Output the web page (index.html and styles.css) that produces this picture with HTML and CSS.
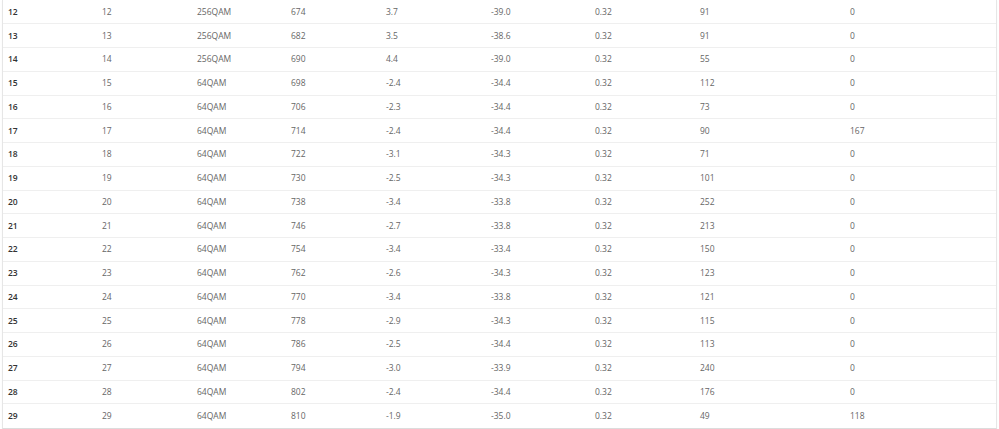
FILE: index.html
```html
<!DOCTYPE html>
<html>
<head>
<meta charset="utf-8">
<link rel="stylesheet" href="styles.css">
</head>
<body>
<div class="panel">
<table class="grid">
<colgroup>
<col class="c1"><col class="c2"><col class="c3"><col class="c4"><col class="c5"><col class="c6"><col class="c7"><col class="c8"><col class="c9">
</colgroup>
<tbody>
<tr><th>12</th><td>12</td><td>256QAM</td><td>674</td><td>3.7</td><td>-39.0</td><td>0.32</td><td>91</td><td>0</td></tr>
<tr><th>13</th><td>13</td><td>256QAM</td><td>682</td><td>3.5</td><td>-38.6</td><td>0.32</td><td>91</td><td>0</td></tr>
<tr><th>14</th><td>14</td><td>256QAM</td><td>690</td><td>4.4</td><td>-39.0</td><td>0.32</td><td>55</td><td>0</td></tr>
<tr><th>15</th><td>15</td><td>64QAM</td><td>698</td><td>-2.4</td><td>-34.4</td><td>0.32</td><td>112</td><td>0</td></tr>
<tr><th>16</th><td>16</td><td>64QAM</td><td>706</td><td>-2.3</td><td>-34.4</td><td>0.32</td><td>73</td><td>0</td></tr>
<tr><th>17</th><td>17</td><td>64QAM</td><td>714</td><td>-2.4</td><td>-34.4</td><td>0.32</td><td>90</td><td>167</td></tr>
<tr><th>18</th><td>18</td><td>64QAM</td><td>722</td><td>-3.1</td><td>-34.3</td><td>0.32</td><td>71</td><td>0</td></tr>
<tr><th>19</th><td>19</td><td>64QAM</td><td>730</td><td>-2.5</td><td>-34.3</td><td>0.32</td><td>101</td><td>0</td></tr>
<tr><th>20</th><td>20</td><td>64QAM</td><td>738</td><td>-3.4</td><td>-33.8</td><td>0.32</td><td>252</td><td>0</td></tr>
<tr><th>21</th><td>21</td><td>64QAM</td><td>746</td><td>-2.7</td><td>-33.8</td><td>0.32</td><td>213</td><td>0</td></tr>
<tr><th>22</th><td>22</td><td>64QAM</td><td>754</td><td>-3.4</td><td>-33.4</td><td>0.32</td><td>150</td><td>0</td></tr>
<tr><th>23</th><td>23</td><td>64QAM</td><td>762</td><td>-2.6</td><td>-34.3</td><td>0.32</td><td>123</td><td>0</td></tr>
<tr><th>24</th><td>24</td><td>64QAM</td><td>770</td><td>-3.4</td><td>-33.8</td><td>0.32</td><td>121</td><td>0</td></tr>
<tr><th>25</th><td>25</td><td>64QAM</td><td>778</td><td>-2.9</td><td>-34.3</td><td>0.32</td><td>115</td><td>0</td></tr>
<tr><th>26</th><td>26</td><td>64QAM</td><td>786</td><td>-2.5</td><td>-34.4</td><td>0.32</td><td>113</td><td>0</td></tr>
<tr><th>27</th><td>27</td><td>64QAM</td><td>794</td><td>-3.0</td><td>-33.9</td><td>0.32</td><td>240</td><td>0</td></tr>
<tr><th>28</th><td>28</td><td>64QAM</td><td>802</td><td>-2.4</td><td>-34.4</td><td>0.32</td><td>176</td><td>0</td></tr>
<tr class="last"><th>29</th><td>29</td><td>64QAM</td><td>810</td><td>-1.9</td><td>-35.0</td><td>0.32</td><td>49</td><td>118</td></tr>
</tbody>
</table>
</div>
</body>
</html>
```

FILE: styles.css
```css
html, body {
  margin: 0;
  padding: 0;
  background: #ffffff;
}
body {
  font-family: "Open Sans", "Liberation Sans", sans-serif;
  font-size: 8.5px;
  color: #666666;
}
.panel {
  margin-left: 2px;
  width: 993px;
  border-left: 1px solid #e6e6e6;
  border-right: 1px solid #e6e6e6;
  border-bottom: 1px solid #dcdcdc;
  box-shadow: 0 1px 1px rgba(0,0,0,0.06);
}
.grid {
  width: 100%;
  border-collapse: collapse;
  table-layout: fixed;
}
.c1 { width: 94px; }
.c2 { width: 95px; }
.c3 { width: 94px; }
.c4 { width: 95px; }
.c5 { width: 105px; }
.c6 { width: 104px; }
.c7 { width: 105px; }
.c8 { width: 150px; }
.c9 { width: auto; }
.grid tr {
  height: 23.75px;
}
.grid th, .grid td {
  padding: 0 0 0 5px;
  text-align: left;
  vertical-align: middle;
  border-bottom: 1px solid #efefef;
  line-height: 12px;
  white-space: nowrap;
}
.grid th {
  font-weight: 600;
  color: #333333;
}
.grid tr.last th, .grid tr.last td {
  border-bottom: none;
}
```
